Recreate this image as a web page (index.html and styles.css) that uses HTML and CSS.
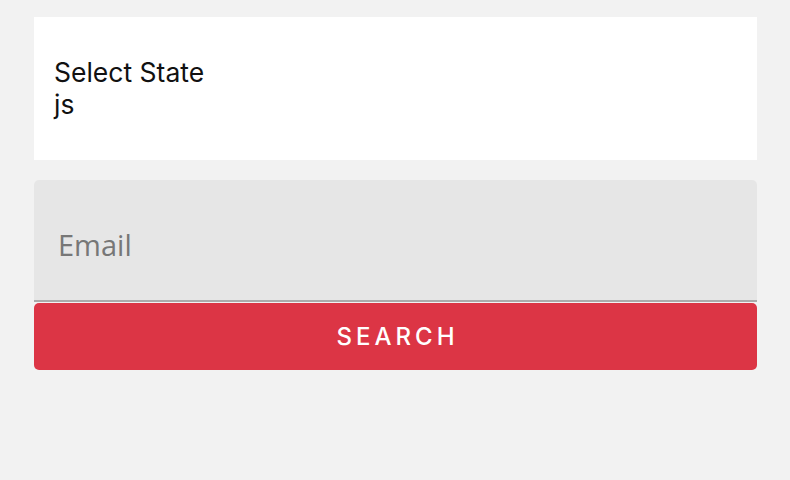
FILE: index.html
```html
<!DOCTYPE html>
<html>
<head>
<meta charset="utf-8">
<link rel="stylesheet" href="styles.css">
</head>
<body>
<div class="page">
  <div class="card">
    <div class="label">Select State</div>
    <div class="value">js</div>
  </div>
  <div class="field">
    <span class="placeholder">Email</span>
  </div>
  <button class="btn">SEARCH</button>
</div>
</body>
</html>
```

FILE: styles.css
```css
html, body {
  margin: 0;
  padding: 0;
  background: #f2f2f2;
}
.page {
  padding: 17px 33px 0 34px;
  display: flex;
  flex-direction: column;
}
.card {
  background: #fff;
  height: 143px;
  box-sizing: border-box;
  padding: 39px 20px 0 20px;
  font-family: Inter, Roboto, sans-serif;
  font-size: 26.5px;
  line-height: 32px;
  color: #111;
}
.field {
  margin-top: 20px;
  background: #e6e6e6;
  height: 122px;
  border-radius: 5px 5px 0 0;
  border-bottom: 2px solid #ababab;
  box-sizing: border-box;
  display: flex;
  align-items: center;
  padding: 8px 24px 0 24px;
}
.placeholder {
  font-family: "Open Sans", sans-serif;
  font-size: 29px;
  color: #777;
}
.btn {
  margin-top: 1px;
  height: 67px;
  border: none;
  border-radius: 5px;
  background: #dc3545;
  color: #fff;
  font-family: Inter, Roboto, sans-serif;
  font-size: 24px;
  font-weight: 500;
  letter-spacing: 4px;
  padding: 0 0 0 4px;
}
```
